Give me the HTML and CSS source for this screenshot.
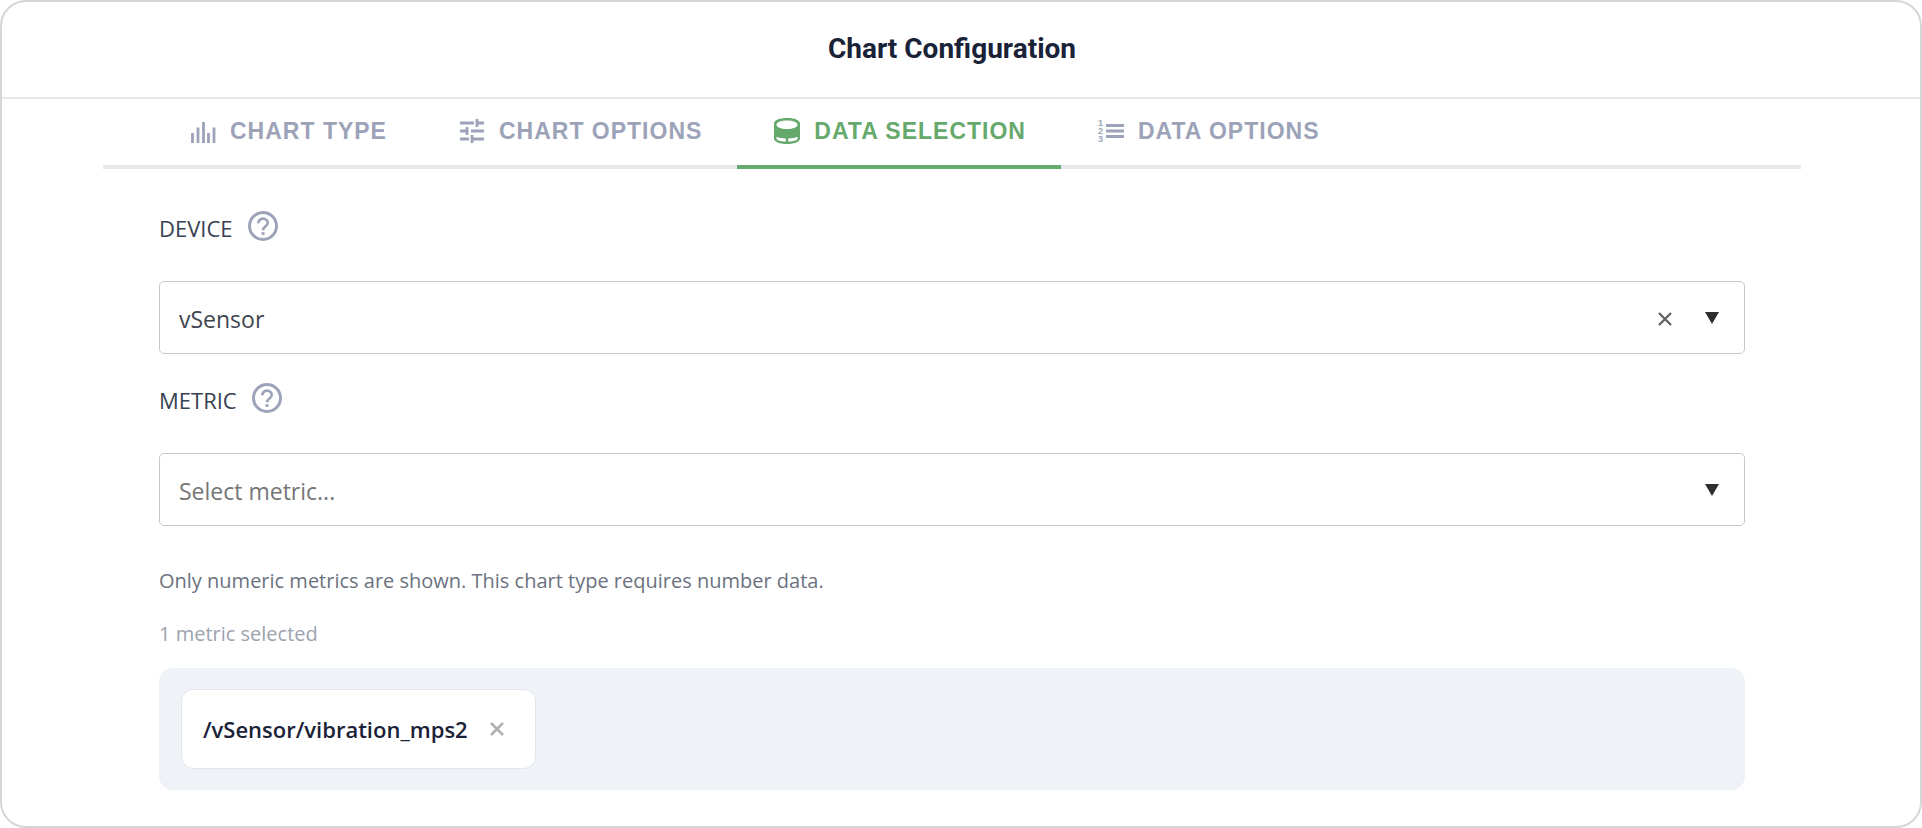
FILE: index.html
```html
<!DOCTYPE html>
<html lang="en">
<head>
<meta charset="UTF-8">
<meta name="viewport" content="width=device-width, initial-scale=1">
<title>Chart Configuration</title>
<link rel="stylesheet" href="styles.css">
</head>
<body>
<div class="dialog">
  <header class="dialog-header">
    <h1>Chart Configuration</h1>
  </header>

  <div class="dialog-body">
    <nav class="tabs" role="tablist">
      <button class="tab" role="tab" type="button">
        <svg class="tab-icon" viewBox="0 0 26 26" aria-hidden="true">
          <path d="M2.500 25V15M8 25V9.500M13.500 25V4M18.500 25V15M24 25V9.500" fill="none" stroke="currentColor" stroke-width="2.800"/>
        </svg>
        CHART TYPE
      </button>
      <button class="tab" role="tab" type="button">
        <svg class="tab-icon" viewBox="0 0 26 26" aria-hidden="true">
          <path d="M1 5h14M18 5h7M18 1v8M1 13h7M8 9v8M12 13h13M1 21h9M13 17v8M13 21h12" fill="none" stroke="currentColor" stroke-width="2.800"/>
        </svg>
        CHART OPTIONS
      </button>
      <button class="tab active" role="tab" type="button" aria-selected="true">
        <svg class="tab-icon" viewBox="0 0 26 26" aria-hidden="true">
          <path fill="currentColor" fill-rule="evenodd" d="M13 0C5.500 0 0 2.200 0 5.500v15C0 23.800 5.500 26 13 26s13-2.200 13-5.500v-15C26 2.200 20.500 0 13 0zM13 2.600c6 0 10.500 1.600 10.500 4.200S19 11 13 11 2.500 9.400 2.500 6.800 7 2.600 13 2.600zM2.500 18.800c2.500 1 5.500 1.500 9.300 1.600v3.200c-5-.2-9.300-1.400-9.300-3.200zM23.500 18.800v1.600c0 1.800-4.300 3-9.300 3.200v-3.200c3.800-.1 6.800-.6 9.300-1.600z"/>
        </svg>
        DATA SELECTION
      </button>
      <button class="tab" role="tab" type="button">
        <svg class="tab-icon" viewBox="0 0 26 26" aria-hidden="true">
          <path d="M8 7.500h18M8 13h18M8 18.500h18" fill="none" stroke="currentColor" stroke-width="2.800"/>
          <g class="tab-icon-digits" fill="currentColor">
            <text x="0" y="8">1</text>
            <text x="0" y="16">2</text>
            <text x="0" y="24">3</text>
          </g>
        </svg>
        DATA OPTIONS
      </button>
    </nav>

    <form class="form">
      <div class="field-head">
        <label for="device">DEVICE</label>
        <button class="help" type="button" aria-label="About device">
          <svg viewBox="0 0 30 30" fill="none" stroke="currentColor">
            <circle cx="15" cy="15" r="13.500" stroke-width="3"/>
            <path d="M10.300 12.300c0-2.800 2-4.600 4.700-4.600s4.700 1.800 4.700 4.300c0 3.400-4.700 3.700-4.700 7.200" stroke-width="2.700"/>
            <path d="M15 21.200v2.700" stroke-width="3"/>
          </svg>
        </button>
      </div>
      <div class="select-box">
        <select id="device">
          <option selected>vSensor</option>
        </select>
        <button class="clear" type="button" aria-label="Clear device">
          <svg viewBox="0 0 14 14"><path d="M1 1l12 12M13 1L1 13" stroke="currentColor" stroke-width="2.300"/></svg>
        </button>
        <svg class="arrow" viewBox="0 0 14 12" aria-hidden="true"><path d="M0 0h14L7 12z" fill="currentColor"/></svg>
      </div>

      <div class="field-head">
        <label for="metric">METRIC</label>
        <button class="help" type="button" aria-label="About metric">
          <svg viewBox="0 0 30 30" fill="none" stroke="currentColor">
            <circle cx="15" cy="15" r="13.500" stroke-width="3"/>
            <path d="M10.300 12.300c0-2.800 2-4.600 4.700-4.600s4.700 1.800 4.700 4.300c0 3.400-4.700 3.700-4.700 7.200" stroke-width="2.700"/>
            <path d="M15 21.200v2.700" stroke-width="3"/>
          </svg>
        </button>
      </div>
      <div class="select-box">
        <select id="metric" class="empty">
          <option value="" selected>Select metric...</option>
        </select>
        <svg class="arrow" viewBox="0 0 14 12" aria-hidden="true"><path d="M0 0h14L7 12z" fill="currentColor"/></svg>
      </div>

      <p class="hint">Only numeric metrics are shown. This chart type requires number data.</p>
      <p class="count">1 metric selected</p>

      <div class="chips">
        <div class="chip">
          <span>/vSensor/vibration_mps2</span>
          <button class="remove" type="button" aria-label="Remove metric">
            <svg viewBox="0 0 14 14"><path d="M1 1l12 12M13 1L1 13" stroke="currentColor" stroke-width="2.500"/></svg>
          </button>
        </div>
      </div>
    </form>
  </div>
</div>
</body>
</html>
```

FILE: styles.css
```css
* { box-sizing: border-box; }
body {
  margin: 0;
  background: #fff;
  color: #374151;
  font-family: "Open Sans", "Noto Sans", sans-serif;
}
button {
  padding: 0;
  border: 0;
  background: none;
  cursor: pointer;
}
svg { display: block; }

.dialog {
  min-height: 100vh;
  border: 2px solid #d6d6d6;
  border-radius: 26px;
}
.dialog-header {
  padding: 27px 18px 29px 0;
  border-bottom: 2px solid #e5e7eb;
}
.dialog-header h1 {
  margin: 0;
  font-family: Roboto, sans-serif;
  font-size: 28px;
  font-weight: 700;
  line-height: 39px;
  text-align: center;
  color: #1a2238;
}
.dialog-body { padding: 0 119px 36px 101px; }

/* tabs */
.tabs {
  display: flex;
  padding-left: 50px;
  border-bottom: 4px solid #e5e7eb;
}
.tab {
  display: flex;
  align-items: center;
  gap: 14px;
  height: 70px;
  margin-bottom: -4px;
  padding: 0 35px 2px 37px;
  border-bottom: 4px solid transparent;
  color: #9ca3b8;
  font-family: "Liberation Sans", Arial, sans-serif;
  font-size: 23px;
  font-weight: bold;
  letter-spacing: 1px;
  white-space: nowrap;
}
.tab.active {
  color: #66a96d;
  border-bottom-color: #66a96d;
}
.tab-icon {
  width: 26px;
  height: 26px;
}
.tab-icon-digits {
  font-size: 9px;
  letter-spacing: 0;
}

/* fields */
.form { padding: 42px 56px 0; }
.field-head {
  display: flex;
  align-items: flex-end;
  gap: 15px;
  height: 31px;
  margin-bottom: 39px;
}
.field-head label {
  font-size: 22px;
  font-weight: 500;
  line-height: 28px;
}
.help {
  align-self: flex-start;
  color: #9ca3b8;
}
.help svg {
  width: 30px;
  height: 30px;
}
.select-box {
  position: relative;
  margin-bottom: 29px;
}
.select-box select {
  display: block;
  width: 100%;
  height: 73px;
  padding: 3px 100px 0 19px;
  appearance: none;
  border: 1px solid #c8c8cc;
  border-radius: 5px;
  background: #fff;
  color: #414550;
  font-family: inherit;
  font-size: 23px;
}
.select-box select.empty { color: #757575; }
.arrow {
  position: absolute;
  top: 31px;
  right: 26px;
  width: 14px;
  height: 12px;
  color: #2e2e2e;
}
.clear {
  position: absolute;
  top: 31px;
  right: 73px;
  color: #616161;
}
.clear svg,
.remove svg {
  width: 14px;
  height: 14px;
}

.hint,
.count {
  margin: 0;
  font-size: 20px;
  line-height: 28px;
}
.hint {
  margin-top: 41px;
  color: #6b7280;
}
.count {
  margin-top: 25px;
  color: #9ca3af;
}

/* selected metrics */
.chips {
  display: flex;
  flex-wrap: wrap;
  gap: 16px;
  margin-top: 20px;
  padding: 21px 22px;
  border-radius: 14px;
  background: #eff2f7;
}
.chip {
  display: flex;
  align-items: center;
  gap: 22px;
  height: 80px;
  padding: 0 31px 0 21px;
  border: 1px solid #e2e5ec;
  border-radius: 12px;
  background: #fff;
  color: #1a2238;
  font-size: 22px;
  font-weight: 600;
}
.remove { color: #b0b0b4; }
```
